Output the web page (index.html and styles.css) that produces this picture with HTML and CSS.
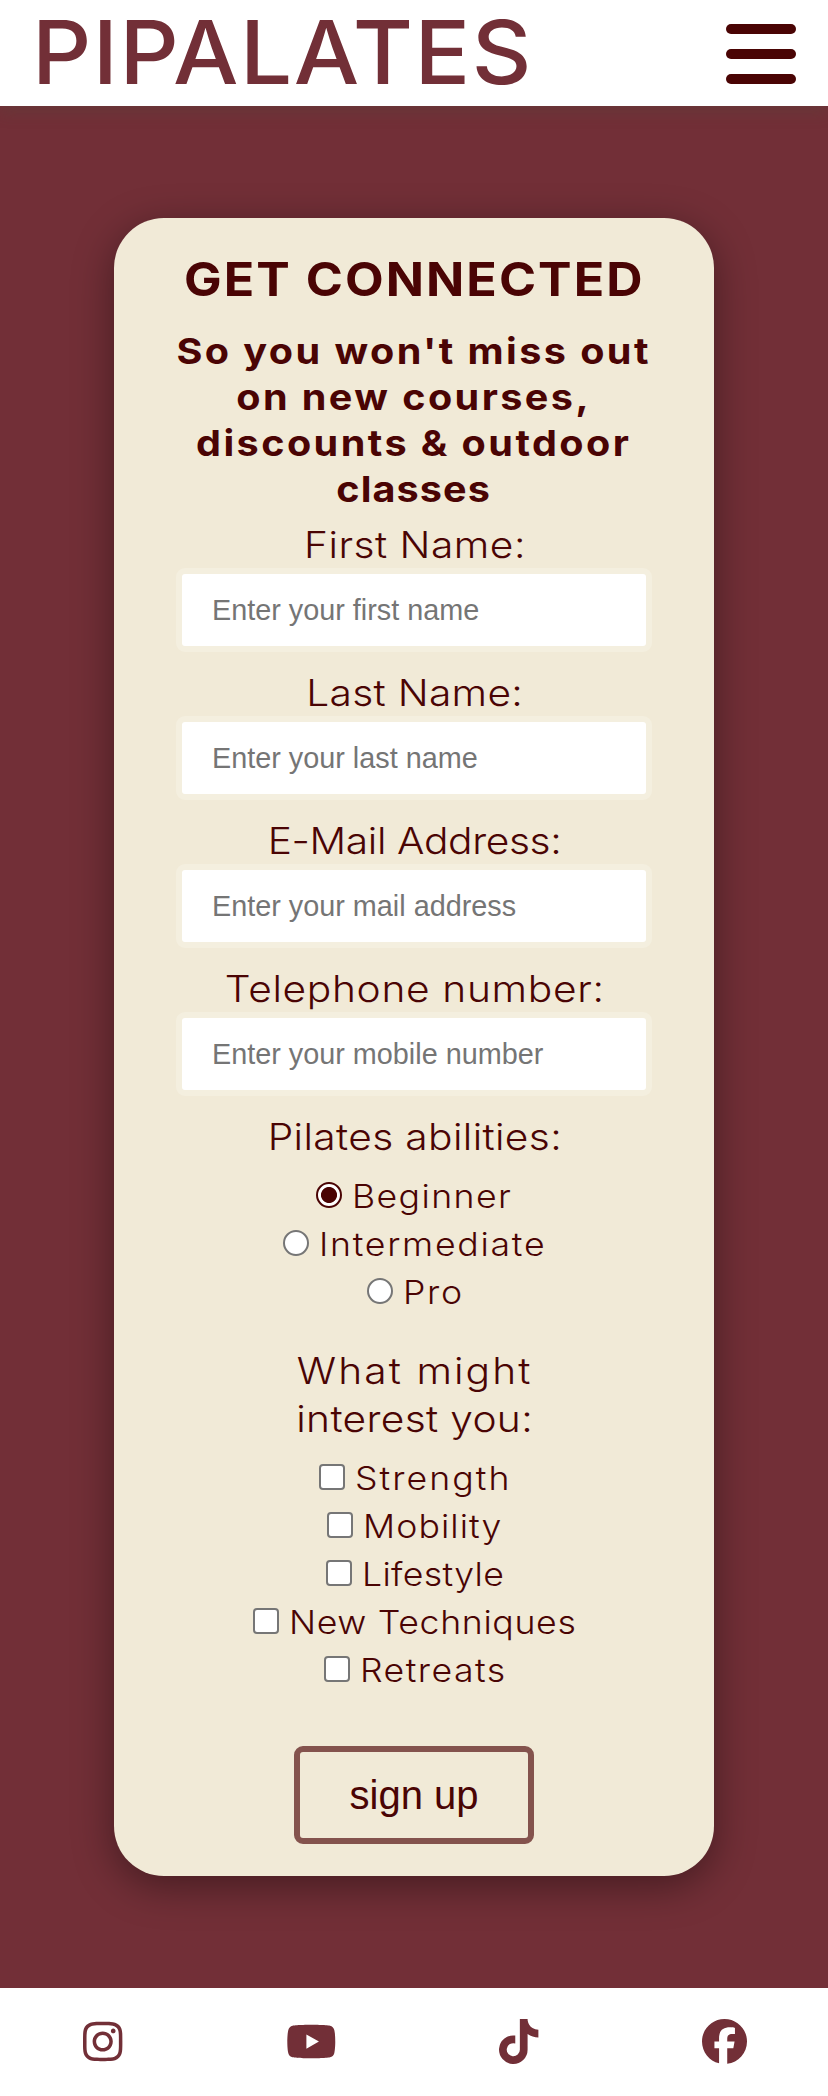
FILE: index.html
```html
<!DOCTYPE html>
<html lang="en">
<head>
<meta charset="utf-8">
<title>Pipalates</title>
<link rel="stylesheet" href="styles.css">
</head>
<body>
<header class="header">
  <span class="logo">PIPALATES</span>
  <button class="menu" type="button" aria-label="Menu"><i></i><i></i><i></i></button>
</header>
<main class="main">
  <form class="card">
    <h1 class="title"><span>GET CONNECTED</span></h1>
    <h2 class="subtitle"><span>So you won't miss out</span><span>on new courses,</span><span>discounts &amp; outdoor</span><span class="t-classes">classes</span></h2>

    <label class="label" for="first"><span class="t-first">First Name:</span></label>
    <input class="input" id="first" type="text" placeholder="Enter your first name">
    <label class="label" for="last"><span class="t-last">Last Name:</span></label>
    <input class="input" id="last" type="text" placeholder="Enter your last name">
    <label class="label" for="mail"><span class="t-mail">E-Mail Address:</span></label>
    <input class="input" id="mail" type="email" placeholder="Enter your mail address">
    <label class="label" for="tel"><span class="t-tel">Telephone number:</span></label>
    <input class="input" id="tel" type="tel" placeholder="Enter your mobile number">

    <div class="label"><span class="t-abilities">Pilates abilities:</span></div>
    <div class="options">
      <label class="option"><input type="radio" name="level" checked><span class="t-beginner">Beginner</span></label>
      <label class="option"><input type="radio" name="level"><span class="t-intermediate">Intermediate</span></label>
      <label class="option"><input type="radio" name="level"><span class="t-pro">Pro</span></label>
    </div>

    <div class="label interests"><span class="t-what">What might</span><span class="t-interest">interest you:</span></div>
    <div class="options">
      <label class="option"><input type="checkbox"><span class="t-strength">Strength</span></label>
      <label class="option"><input type="checkbox"><span class="t-mobility">Mobility</span></label>
      <label class="option"><input type="checkbox"><span class="t-lifestyle">Lifestyle</span></label>
      <label class="option"><input type="checkbox"><span class="t-techniques">New Techniques</span></label>
      <label class="option"><input type="checkbox"><span class="t-retreats">Retreats</span></label>
    </div>

    <button class="submit" type="button">sign up</button>
  </form>
</main>
<footer class="footer">
  <svg class="icon" viewBox="0 0 448 512" width="39.4" height="45"><path d="M224.1 141c-63.600 0-114.900 51.300-114.900 114.900s51.300 114.900 114.900 114.900S339 319.500 339 255.900 287.700 141 224.100 141zm0 189.600c-41.100 0-74.700-33.500-74.700-74.700s33.500-74.700 74.700-74.700 74.700 33.500 74.700 74.700-33.600 74.700-74.700 74.700zm146.400-194.300c0 14.900-12 26.800-26.800 26.800-14.900 0-26.800-12-26.800-26.800s12-26.800 26.800-26.800 26.800 12 26.800 26.800zm76.100 27.200c-1.700-35.900-9.900-67.700-36.200-93.900-26.200-26.200-58-34.400-93.900-36.200-37-2.100-147.900-2.100-184.900 0-35.800 1.700-67.600 9.900-93.900 36.100s-34.400 58-36.200 93.900c-2.100 37-2.100 147.900 0 184.900 1.700 35.900 9.900 67.700 36.200 93.900s58 34.400 93.900 36.200c37 2.100 147.900 2.100 184.900 0 35.900-1.700 67.700-9.900 93.900-36.200 26.200-26.200 34.400-58 36.200-93.900 2.100-37 2.100-147.800 0-184.800zM398.800 388c-7.800 19.600-22.900 34.700-42.600 42.600-29.500 11.700-99.500 9-132.100 9s-102.700 2.600-132.100-9c-19.600-7.800-34.700-22.900-42.600-42.600-11.700-29.500-9-99.500-9-132.100s-2.600-102.700 9-132.100c7.800-19.600 22.900-34.700 42.600-42.600 29.500-11.700 99.500-9 132.100-9s102.700-2.600 132.100 9c19.600 7.800 34.700 22.900 42.600 42.600 11.700 29.500 9 99.500 9 132.100s2.700 102.700-9 132.100z"/></svg>
  <svg class="icon" viewBox="0 0 576 512" width="50.600" height="45"><path d="M549.655 124.083c-6.281-23.650-24.787-42.276-48.284-48.597C458.781 64 288 64 288 64S117.220 64 74.629 75.486c-23.497 6.322-42.003 24.947-48.284 48.597-11.412 42.867-11.412 132.305-11.412 132.305s0 89.438 11.412 132.305c6.281 23.650 24.787 41.500 48.284 47.821C117.220 448 288 448 288 448s170.780 0 213.371-11.486c23.497-6.321 42.003-24.171 48.284-47.821 11.412-42.867 11.412-132.305 11.412-132.305s0-89.438-11.412-132.305zm-317.510 213.508V175.185l142.739 81.205-142.739 81.201z"/></svg>
  <svg class="icon" viewBox="0 0 448 512" width="39.4" height="45"><path d="M448 209.910a210.060 210.060 0 0 1-122.770-39.250V349.380A162.550 162.550 0 1 1 185 188.310V278.200a74.620 74.620 0 1 0 52.230 71.180V0l88 0a121.180 121.180 0 0 0 1.860 22.170A122.180 122.180 0 0 0 381 102.390a121.430 121.430 0 0 0 67 20.140z"/></svg>
  <svg class="icon" viewBox="0 0 512 512" width="45" height="45"><path d="M512 256C512 114.600 397.400 0 256 0S0 114.600 0 256C0 376 82.700 476.800 194.200 504.500V334.200H141.400V256h52.800V222.300c0-87.100 39.400-127.500 125-127.500c16.200 0 44.200 3.200 55.700 6.400V172c-6-.6-16.500-1-29.600-1c-42 0-58.200 15.900-58.200 57.200V256h83.600l-14.400 78.200H287V510.100C413.800 494.800 512 386.900 512 256z"/></svg>
</footer>
</body>
</html>
```
FILE: styles.css
```css
* { box-sizing: border-box; }
body {
  margin: 0;
  background: #722f37;
  color: #4a0404;
  font-family: Inter, "Open Sans", sans-serif;
}
.header {
  position: relative;
  display: flex;
  justify-content: space-between;
  align-items: flex-start;
  height: 106px;
  padding: 0 32px;
  background: #fff;
  box-shadow: 0 7px 14px rgba(85, 70, 60, .32);
}
.logo {
  font-size: 88px;
  font-weight: 500;
  line-height: 104px;
  letter-spacing: 1.4px;
  color: #722f37;
  transform: scaleX(1.05);
  transform-origin: left;
}
.menu {
  display: flex;
  flex-direction: column;
  gap: 15px;
  padding: 24px 0 0;
  border: 0;
  background: none;
}
.menu i { width: 70px; height: 10px; border-radius: 5px; background: #4a0404; }

.main { padding: 112px 114px; }
.card {
  display: flex;
  flex-direction: column;
  align-items: center;
  height: 1658px;
  padding: 32px 62px;
  border-radius: 50px;
  background: #f1ead7;
  box-shadow: 0 10px 40px rgba(0, 0, 0, .4);
}
.title {
  margin: 0 0 20px;
  font-size: 46.5px;
  line-height: 58px;
  letter-spacing: 1.9px;
  white-space: nowrap;
  transform: scaleX(1.08);
}
.subtitle {
  display: flex;
  flex-direction: column;
  align-items: center;
  margin: 0 0 8px;
  font-size: 36px;
  font-weight: 650;
  line-height: 46px;
  letter-spacing: 2.2px;
  white-space: nowrap;
  transform: scaleX(1.1);
}
.t-classes { letter-spacing: 1px; }
.label {
  display: flex;
  flex-direction: column;
  align-items: center;
  padding: 1px 0 0 1px;
  margin-bottom: -1px;
  font-size: 37px;
  font-weight: 300;
  line-height: 48px;
  white-space: nowrap;
  transform: scaleX(1.1);
}
.t-first { letter-spacing: .45px; }
.t-last { letter-spacing: .29px; }
.t-mail { letter-spacing: -.35px; }
.t-tel { letter-spacing: .6px; }
.t-abilities { letter-spacing: .33px; }
.t-what { letter-spacing: 1.9px; }
.t-interest { letter-spacing: .3px; }
.input {
  width: 476px;
  height: 84px;
  margin: 0 0 16px;
  padding: 0 30px;
  border: 6px solid #f4efdf;
  border-radius: 9px;
  background: #fff;
  font: 28.8px "Liberation Sans", Arial, sans-serif;
}
.input::placeholder { color: #757575; }

.options { display: flex; flex-direction: column; align-items: center; margin-top: 12px; }
.interests { margin-top: 30px; }
.option {
  display: flex;
  align-items: center;
  gap: 10px;
  font-size: 33px;
  font-weight: 300;
  line-height: 48px;
  white-space: nowrap;
}
.option input {
  appearance: none;
  width: 26px;
  height: 26px;
  margin: 0 0 2px;
  border: 2px solid #767676;
  border-radius: 4px;
  background: #fff;
}
.option input[type="radio"] { border-radius: 50%; }
.option input[type="radio"]:checked {
  border-color: #4a0404;
  background: radial-gradient(circle, #4a0404 7.6px, #fff 8.4px);
}
.option span { transform: scaleX(1.08); transform-origin: left; }
.option .t-beginner { width: 160px; letter-spacing: 1.3px; }
.option .t-intermediate { width: 226px; letter-spacing: 1.6px; }
.option .t-pro { width: 59px; letter-spacing: 1.6px; }
.option .t-strength { width: 155px; letter-spacing: 1.9px; }
.option .t-mobility { width: 139px; letter-spacing: 1px; }
.option .t-lifestyle { width: 141px; letter-spacing: .3px; }
.option .t-techniques { width: 287px; letter-spacing: .6px; }
.option .t-retreats { width: 145px; letter-spacing: 1.35px; }

.submit {
  width: 240px;
  height: 98px;
  margin-top: 52px;
  padding: 0;
  border: 6px solid #84534d;
  border-radius: 9px;
  background: #f1ead7;
  color: #4a0404;
  font: 40px "Liberation Sans", Arial, sans-serif;
}
.footer {
  display: flex;
  justify-content: space-around;
  align-items: center;
  height: 108px;
  padding: 0 0 2px 2px;
  background: #fff;
}
.icon { fill: #722f37; }
```
